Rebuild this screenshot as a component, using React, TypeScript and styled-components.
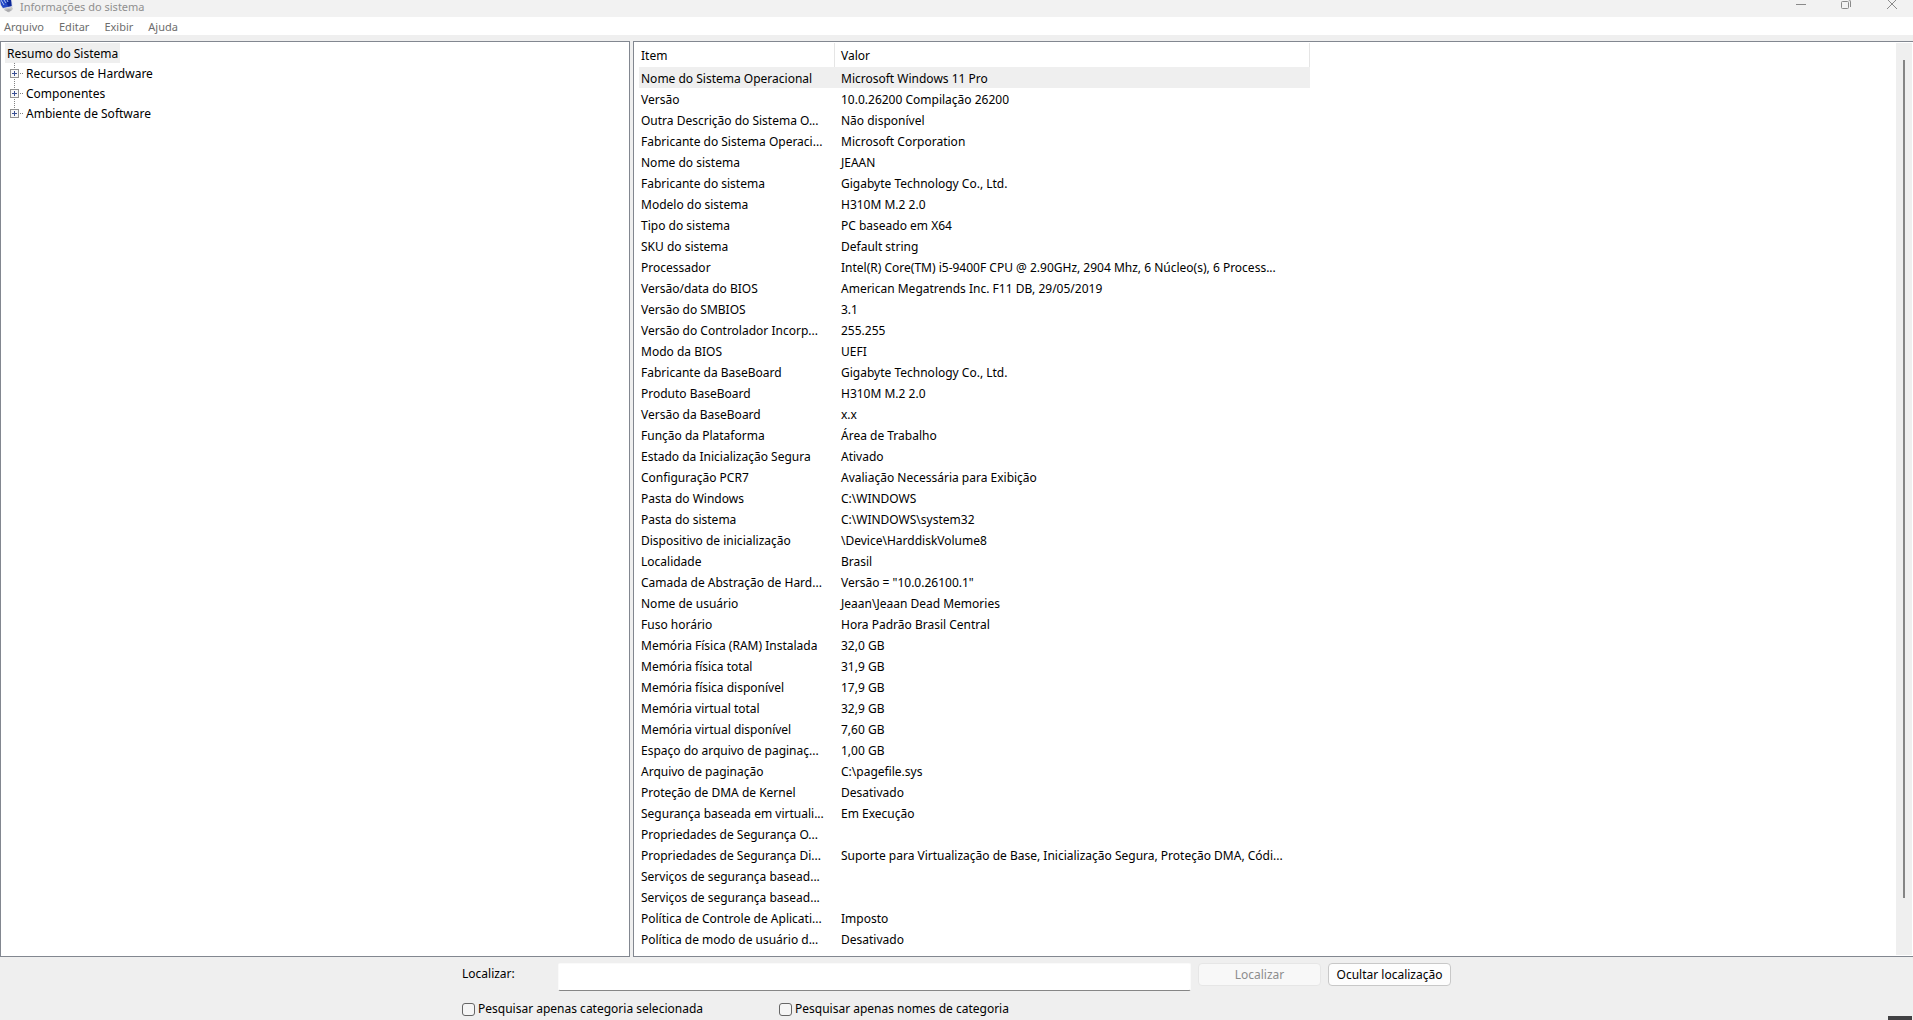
import React from "react";
import styled, { createGlobalStyle } from "styled-components";

const GlobalStyle = createGlobalStyle`
  *, *::before, *::after { box-sizing: border-box; }
  body {
    margin: 0;
    background: #efefef;
    color: #000;
    font: 12px/20px "Noto Sans", "Open Sans", sans-serif;
  }
  button, input { font: inherit; color: inherit; }
`;

const Window = styled.div`
  display: flex;
  flex-direction: column;
  height: 100vh;
  overflow: hidden;
  background: #efefef;
`;

const TitleBar = styled.header`
  display: flex;
  align-items: flex-start;
  height: 17px;
  background: #f2f2f2;
`;

const AppIcon = styled.svg`
  flex: none;
  width: 14px;
  height: 13px;
`;

const Title = styled.h1`
  flex: 1;
  margin: 0;
  padding-left: 6px;
  font-size: 11px;
  font-weight: 400;
  line-height: 14px;
  color: #8f8f8f;
`;

const CaptionButton = styled.button`
  display: flex;
  align-items: flex-start;
  justify-content: center;
  width: 46px;
  height: 17px;
  padding: 0;
  border: 0;
  background: transparent;
  color: #8a8a8a;
`;

const Controls = styled.div`
  display: flex;
  margin-right: -2px;
`;

const MenuBar = styled.nav`
  display: flex;
  gap: 15px;
  height: 18px;
  padding-left: 4px;
  background: #fff;
`;

const MenuItem = styled.button`
  padding: 1px 0 0;
  border: 0;
  background: transparent;
  color: #6d6d6d;
  font-size: 11px;
  line-height: 17px;
`;

const Panes = styled.main`
  flex: 1;
  min-height: 0;
  display: grid;
  grid-template-columns: 630px minmax(0, 1fr);
  gap: 3px;
  margin-top: 6px;
`;

const Pane = styled.section`
  display: flex;
  min-width: 0;
  background: #fff;
  border: 1px solid #828790;
  overflow: hidden;
`;

const TreePane = styled(Pane)`
  padding: 1px 4px;
`;

const ListPane = styled(Pane)`
  border-right: 0;
  padding: 1px 1px 1px 5px;
  justify-content: space-between;
`;

const Tree = styled.ul`
  margin: 0;
  padding: 0;
  list-style: none;
`;

const Root = styled.li`
  display: flex;
`;

const NodeLabel = styled.span<{ $selected?: boolean }>`
  height: 20px;
  padding: 2px 2px 0;
  line-height: 18px;
  background: ${(p) => (p.$selected ? "#efefef" : "transparent")};
`;

const Branch = styled.li`
  display: flex;
  height: 20px;
  padding-left: 5px;
`;

const Expander = styled.button`
  display: block;
  width: 14px;
  height: 20px;
  padding: 0;
  border: 0;
  background: transparent;

  svg { display: block; }
`;

const Table = styled.table`
  width: 671px;
  table-layout: fixed;
  border-collapse: collapse;
  align-self: flex-start;
`;

const NameCol = styled.col`
  width: 196px;
`;

const HeadCell = styled.th`
  height: 24px;
  padding: 2px 2px 0;
  font-weight: 400;
  text-align: left;
  line-height: 20px;
  box-shadow: inset -1px 0 #e5e5e5;

  & + & { padding-left: 6px; }
`;

const Row = styled.tr<{ $selected: boolean }>`
  background: ${(p) => (p.$selected ? "#efefef" : "transparent")};
`;

const Cell = styled.td`
  height: 21px;
  padding: 2px 0 0 2px;
  line-height: 19px;
  white-space: nowrap;
  overflow: hidden;

  & + & { padding-left: 6px; }
`;

const ScrollTrack = styled.div`
  display: flex;
  flex-direction: column;
  align-items: center;
  width: 16px;
  padding: 17px 0 57px;
  background: #efefef;
`;

const ScrollThumb = styled.div`
  flex: 1;
  width: 2px;
  background: #858585;
`;

const FindBar = styled.form`
  display: grid;
  grid-template-columns: 96px 633px 130px 130px;
  justify-content: center;
  align-items: start;
  row-gap: 7px;
  height: 63px;
  padding-top: 6px;
`;

const FindLabel = styled.label`
  padding-top: 1px;
  line-height: 20px;
`;

const FindInput = styled.input`
  width: 100%;
  height: 28px;
  padding: 0 6px;
  border: 1px solid #fafafa;
  border-bottom-color: #868686;
  border-radius: 2px;
  background: #fff;
  outline: 0;
`;

const PushButton = styled.button`
  height: 23px;
  margin-left: 7px;
  padding: 1px 0 0;
  border: 1px solid #c8c8c8;
  border-radius: 4px;
  background: #fdfdfd;
  line-height: 20px;
  white-space: nowrap;

  &:disabled {
    border-color: #e6e6e6;
    background: #f8f8f8;
    color: #8d8d8d;
  }
`;

const Options = styled.div`
  grid-column: 1 / -1;
  display: grid;
  grid-template-columns: 317px auto;
`;

const Option = styled.label`
  display: flex;
  align-items: center;
  gap: 3px;
  line-height: 20px;
`;

const CheckBox = styled.input`
  appearance: none;
  width: 13px;
  height: 13px;
  margin: 0;
  border: 1px solid #666;
  border-radius: 3px;
  background: #f5f5f5;

  &:checked { background: #005fb8; }
`;

const Corner = styled.div`
  position: fixed;
  right: 1px;
  bottom: 0;
  width: 24px;
  height: 4px;
  background: #414143;
`;

const menus = ["Arquivo", "Editar", "Exibir", "Ajuda"];
const branches = ["Recursos de Hardware", "Componentes", "Ambiente de Software"];

const items: [string, string][] = [
  ["Nome do Sistema Operacional", "Microsoft Windows 11 Pro"],
  ["Versão", "10.0.26200 Compilação 26200"],
  ["Outra Descrição do Sistema O...", "Não disponível"],
  ["Fabricante do Sistema Operaci...", "Microsoft Corporation"],
  ["Nome do sistema", "JEAAN"],
  ["Fabricante do sistema", "Gigabyte Technology Co., Ltd."],
  ["Modelo do sistema", "H310M M.2 2.0"],
  ["Tipo do sistema", "PC baseado em X64"],
  ["SKU do sistema", "Default string"],
  ["Processador", "Intel(R) Core(TM) i5-9400F CPU @ 2.90GHz, 2904 Mhz, 6 Núcleo(s), 6 Process..."],
  ["Versão/data do BIOS", "American Megatrends Inc. F11 DB, 29/05/2019"],
  ["Versão do SMBIOS", "3.1"],
  ["Versão do Controlador Incorp...", "255.255"],
  ["Modo da BIOS", "UEFI"],
  ["Fabricante da BaseBoard", "Gigabyte Technology Co., Ltd."],
  ["Produto BaseBoard", "H310M M.2 2.0"],
  ["Versão da BaseBoard", "x.x"],
  ["Função da Plataforma", "Área de Trabalho"],
  ["Estado da Inicialização Segura", "Ativado"],
  ["Configuração PCR7", "Avaliação Necessária para Exibição"],
  ["Pasta do Windows", "C:\\WINDOWS"],
  ["Pasta do sistema", "C:\\WINDOWS\\system32"],
  ["Dispositivo de inicialização", "\\Device\\HarddiskVolume8"],
  ["Localidade", "Brasil"],
  ["Camada de Abstração de Hard...", "Versão = \"10.0.26100.1\""],
  ["Nome de usuário", "Jeaan\\Jeaan Dead Memories"],
  ["Fuso horário", "Hora Padrão Brasil Central"],
  ["Memória Física (RAM) Instalada", "32,0 GB"],
  ["Memória física total", "31,9 GB"],
  ["Memória física disponível", "17,9 GB"],
  ["Memória virtual total", "32,9 GB"],
  ["Memória virtual disponível", "7,60 GB"],
  ["Espaço do arquivo de paginaç...", "1,00 GB"],
  ["Arquivo de paginação", "C:\\pagefile.sys"],
  ["Proteção de DMA de Kernel", "Desativado"],
  ["Segurança baseada em virtuali...", "Em Execução"],
  ["Propriedades de Segurança O...", ""],
  ["Propriedades de Segurança Di...", "Suporte para Virtualização de Base, Inicialização Segura, Proteção DMA, Códi..."],
  ["Serviços de segurança basead...", ""],
  ["Serviços de segurança basead...", ""],
  ["Política de Controle de Aplicati...", "Imposto"],
  ["Política de modo de usuário d...", "Desativado"],
];

function PlusBox({ last }: { last: boolean }) {
  return (
    <svg width="14" height="20" viewBox="0 0 14 20" shapeRendering="crispEdges" aria-hidden="true">
      <path d={last ? "M4.5 0V6" : "M4.5 0V20"} stroke="#808080" strokeDasharray="1 1" />
      <path d="M10 10.5H13" stroke="#808080" strokeDasharray="1 1" />
      <rect x="0.5" y="6.5" width="8" height="8" fill="#f7f7f7" stroke="#919191" />
      <path d="M2 10.5H7M4.5 8V13" stroke="#3a4f93" />
    </svg>
  );
}

export default function App() {
  return (
    <Window>
      <GlobalStyle />
      <TitleBar>
        <AppIcon viewBox="0 0 14 13" aria-hidden="true">
          <path d="M5 8L12 7L13 9L9 12.5L4 10Z" fill="#c6c6c8" />
          <path d="M5 10L9 9L12 10L8 12Z" fill="#a9a9ad" />
          <path d="M0 0H12L12.5 7L3 9L1 6L0 5Z" fill="#d3d5e0" />
          <path d="M0 0H11L11.5 6L3 8L1 5Z" fill="#2347c4" />
          <path d="M6 0H11L11.5 6L8 6.5Z" fill="#0d2899" />
          <path d="M1 0L4 5M4 0L6 3M7 0L8 2" stroke="#a9bff2" />
        </AppIcon>
        <Title>Informações do sistema</Title>
        <Controls>
          <CaptionButton aria-label="Minimizar">
            <svg width="12" height="10" viewBox="0 0 12 10" fill="none" stroke="currentColor"><path d="M2 4.5H12" /></svg>
          </CaptionButton>
          <CaptionButton aria-label="Restaurar">
            <svg width="12" height="10" viewBox="0 0 12 10" fill="none" stroke="currentColor">
              <rect x="1.5" y="1.5" width="7" height="7" rx="1" />
              <path d="M8 -0.5Q10.5 -0.5 10.5 2V7" />
            </svg>
          </CaptionButton>
          <CaptionButton aria-label="Fechar">
            <svg width="12" height="10" viewBox="0 0 12 10" fill="none" stroke="currentColor"><path d="M1 -1L11 9M11 -1L1 9" /></svg>
          </CaptionButton>
        </Controls>
      </TitleBar>
      <MenuBar>
        {menus.map((m) => <MenuItem key={m}>{m}</MenuItem>)}
      </MenuBar>
      <Panes>
        <TreePane>
          <Tree>
            <Root><NodeLabel $selected>Resumo do Sistema</NodeLabel></Root>
            {branches.map((b, i) => (
              <Branch key={b}>
                <Expander aria-label={`Expandir ${b}`}><PlusBox last={i === branches.length - 1} /></Expander>
                <NodeLabel>{b}</NodeLabel>
              </Branch>
            ))}
          </Tree>
        </TreePane>
        <ListPane>
          <Table>
            <colgroup><NameCol /><col /></colgroup>
            <thead>
              <tr><HeadCell>Item</HeadCell><HeadCell>Valor</HeadCell></tr>
            </thead>
            <tbody>
              {items.map(([name, value], i) => (
                <Row key={i} $selected={i === 0}><Cell>{name}</Cell><Cell>{value}</Cell></Row>
              ))}
            </tbody>
          </Table>
          <ScrollTrack><ScrollThumb /></ScrollTrack>
        </ListPane>
      </Panes>
      <FindBar onSubmit={(e) => e.preventDefault()}>
        <FindLabel htmlFor="find">Localizar:</FindLabel>
        <FindInput id="find" type="text" />
        <PushButton type="submit" disabled>Localizar</PushButton>
        <PushButton type="button">Ocultar localização</PushButton>
        <Options>
          <Option><CheckBox type="checkbox" />Pesquisar apenas categoria selecionada</Option>
          <Option><CheckBox type="checkbox" />Pesquisar apenas nomes de categoria</Option>
        </Options>
      </FindBar>
      <Corner />
    </Window>
  );
}
